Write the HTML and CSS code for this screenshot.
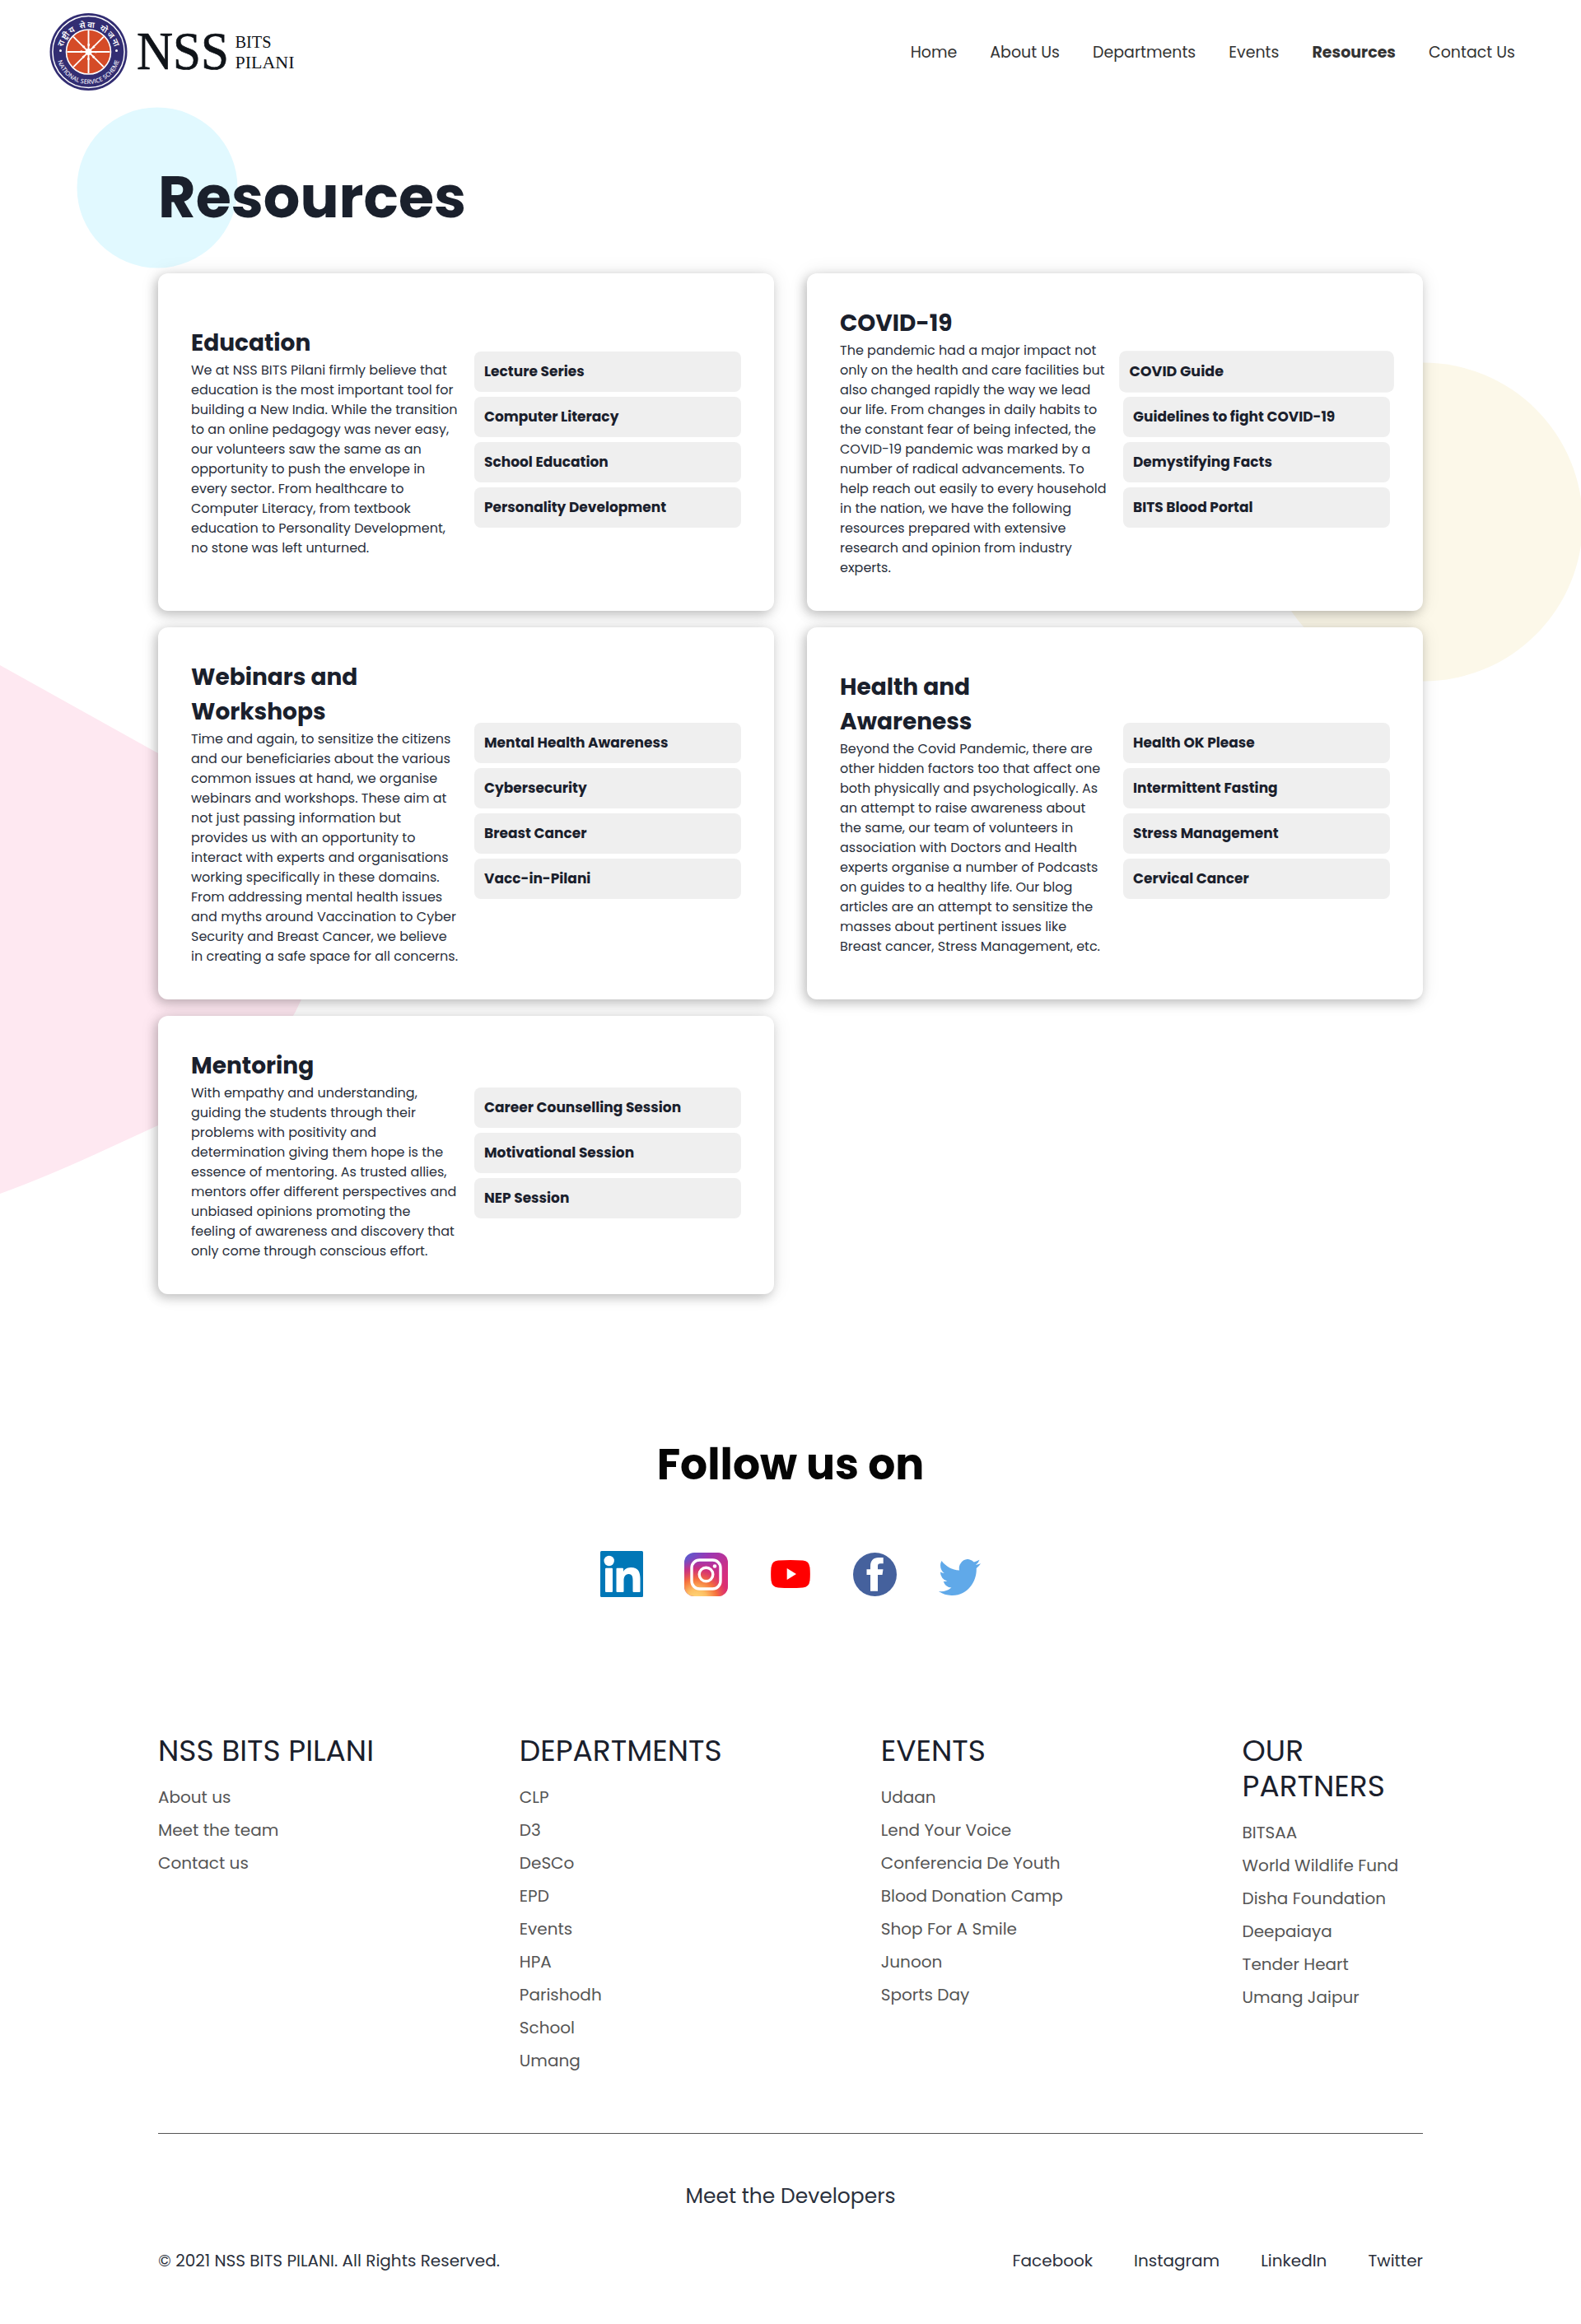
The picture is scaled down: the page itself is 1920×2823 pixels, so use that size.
FILE: index.html
```html
<!DOCTYPE html>
<html lang="en">
<head>
<meta charset="utf-8">
<title>Resources | NSS BITS Pilani</title>
<link rel="stylesheet" href="styles.css">
</head>
<body>
<svg class="shapes" viewBox="0 0 1920 1500" aria-hidden="true">
  <circle cx="191" cy="228" r="97.500" fill="#e1f9ff"/>
  <circle cx="1728.500" cy="634" r="193.500" fill="#fcf8e9"/>
  <path d="M0 808L192 915L340 996Q392 1028 388 1120Q384 1170 366 1214Q330 1300 192 1367L116 1402Q50 1432 0 1450Z" fill="#fee8f1"/>
</svg>

<header class="header">
  <a class="logo" href="#">
    <svg width="300" height="96" viewBox="60 15 300 96">
      <defs>
        <path id="arc-top" d="M75 66A32.500 32.500 0 1 1 140 66"/>
        <path id="arc-bottom" d="M68.500 63A39 39 0 0 0 146.500 63"/>
      </defs>
      <circle cx="107.500" cy="63" r="47" fill="#322d72"/>
      <circle cx="107.500" cy="63" r="43.600" fill="none" stroke="#fff" stroke-width="1.500"/>
      <circle cx="107.500" cy="63" r="27" fill="#d54b27" stroke="#fff" stroke-width="1.600"/>
      <g stroke="#fff" stroke-width="1.900">
        <path d="M107.500 37v52M81.500 63h52M89.100 44.600l36.800 36.800M125.900 44.600L89.100 81.400"/>
      </g>
      <circle cx="107.500" cy="63" r="8.500" fill="none" stroke="#fff" stroke-width="2.600" stroke-dasharray="2.600 4.076" stroke-dashoffset="1.300"/>
      <circle cx="107.500" cy="63" r="4" fill="#fff"/>
      <circle cx="73.500" cy="61.500" r="1.500" fill="#fff"/>
      <circle cx="141.500" cy="61.500" r="1.500" fill="#fff"/>
      <text class="seal-hindi"><textPath href="#arc-top" startOffset="50%" text-anchor="middle" textLength="84">राष्ट्रीय सेवा योजना</textPath></text>
      <text class="seal-english"><textPath href="#arc-bottom" startOffset="50%" text-anchor="middle" textLength="100">NATIONAL SERVICE SCHEME</textPath></text>
      <text class="logo-nss" x="166" y="84" textLength="112" lengthAdjust="spacingAndGlyphs">NSS</text>
      <text class="logo-sub" x="285.500" y="58" textLength="44" lengthAdjust="spacingAndGlyphs">BITS</text>
      <text class="logo-sub" x="285.500" y="83" textLength="72" lengthAdjust="spacingAndGlyphs">PILANI</text>
    </svg>
  </a>
  <nav class="nav">
    <a href="#">Home</a>
    <a href="#">About Us</a>
    <a href="#">Departments</a>
    <a href="#">Events</a>
    <a class="active" href="#">Resources</a>
    <a href="#">Contact Us</a>
  </nav>
</header>

<main class="container">
  <h1 class="page-title">Resources</h1>
  <section class="cards">
    <article class="card">
      <div class="card-text">
        <h2>Education</h2>
        <p>We at NSS BITS Pilani firmly believe that education is the most important tool for building a New India. While the transition to an online pedagogy was never easy, our volunteers saw the same as an opportunity to push the envelope in every sector. From healthcare to Computer Literacy, from textbook education to Personality Development, no stone was left unturned.</p>
      </div>
      <div class="card-links">
        <a href="#">Lecture Series</a>
        <a href="#">Computer Literacy</a>
        <a href="#">School Education</a>
        <a href="#">Personality Development</a>
      </div>
    </article>
    <article class="card">
      <div class="card-text">
        <h2>COVID-19</h2>
        <p>The pandemic had a major impact not only on the health and care facilities but also changed rapidly the way we lead our life. From changes in daily habits to the constant fear of being infected, the COVID-19 pandemic was marked by a number of radical advancements. To help reach out easily to every household in the nation, we have the following resources prepared with extensive research and opinion from industry experts.</p>
      </div>
      <div class="card-links">
        <a class="hovered" href="#">COVID Guide</a>
        <a href="#">Guidelines to fight COVID-19</a>
        <a href="#">Demystifying Facts</a>
        <a href="#">BITS Blood Portal</a>
      </div>
    </article>
    <article class="card">
      <div class="card-text">
        <h2>Webinars and Workshops</h2>
        <p>Time and again, to sensitize the citizens and our beneficiaries about the various common issues at hand, we organise webinars and workshops. These aim at not just passing information but provides us with an opportunity to interact with experts and organisations working specifically in these domains. From addressing mental health issues and myths around Vaccination to Cyber Security and Breast Cancer, we believe in creating a safe space for all concerns.</p>
      </div>
      <div class="card-links">
        <a href="#">Mental Health Awareness</a>
        <a href="#">Cybersecurity</a>
        <a href="#">Breast Cancer</a>
        <a href="#">Vacc-in-Pilani</a>
      </div>
    </article>
    <article class="card">
      <div class="card-text">
        <h2>Health and Awareness</h2>
        <p>Beyond the Covid Pandemic, there are other hidden factors too that affect one both physically and psychologically. As an attempt to raise awareness about the same, our team of volunteers in association with Doctors and Health experts organise a number of Podcasts on guides to a healthy life. Our blog articles are an attempt to sensitize the masses about pertinent issues like Breast cancer, Stress Management, etc.</p>
      </div>
      <div class="card-links">
        <a href="#">Health OK Please</a>
        <a href="#">Intermittent Fasting</a>
        <a href="#">Stress Management</a>
        <a href="#">Cervical Cancer</a>
      </div>
    </article>
    <article class="card">
      <div class="card-text">
        <h2>Mentoring</h2>
        <p>With empathy and understanding, guiding the students through their problems with positivity and determination giving them hope is the essence of mentoring. As trusted allies, mentors offer different perspectives and unbiased opinions promoting the feeling of awareness and discovery that only come through conscious effort.</p>
      </div>
      <div class="card-links">
        <a href="#">Career Counselling Session</a>
        <a href="#">Motivational Session</a>
        <a href="#">NEP Session</a>
      </div>
    </article>
  </section>
</main>

<section class="follow">
  <h2>Follow us on</h2>
  <div class="socials">
    <a href="#" aria-label="LinkedIn"><svg width="52" height="56" viewBox="0 0 52 56"><rect width="52" height="56" rx="1.500" fill="#0077b7"/><g fill="#fff"><circle cx="10.700" cy="12" r="6.200"/><rect x="6" y="20.700" width="9" height="29.300" rx="1"/><path d="M20.500 20.700H27q1 0 1 1v3.200c1.800-3 5.200-5 9.200-5 9 0 11.300 5.800 11.300 13.500V49q0 1-1 1h-7q-1 0-1-1V36c0-4-.5-8-5-8s-6 4-6 8v13q0 1-1 1h-7q-1 0-1-1V21.700q0-1 1-1z"/></g></svg></a>
    <a href="#" aria-label="Instagram"><svg width="53" height="53" viewBox="0 0 53 53"><defs><linearGradient id="ig-base" x1="0" y1="0" x2=".75" y2=".75"><stop offset="0" stop-color="#4f62d3"/><stop offset=".4" stop-color="#9a38b4"/><stop offset="1" stop-color="#dc2c78"/></linearGradient><radialGradient id="ig-warm" cx=".28" cy="1.080" r=".95"><stop offset="0" stop-color="#ffdc7d"/><stop offset=".25" stop-color="#fdbf63"/><stop offset=".5" stop-color="#f5703c"/><stop offset=".75" stop-color="#dd2f6c" stop-opacity=".75"/><stop offset="1" stop-color="#c32f9c" stop-opacity="0"/></radialGradient></defs><rect width="53" height="53" rx="12" fill="url(#ig-base)"/><rect width="53" height="53" rx="12" fill="url(#ig-warm)"/><g fill="none" stroke="#fff" stroke-width="3.400"><rect x="9" y="9" width="35" height="35" rx="9.500"/><circle cx="26.500" cy="26.500" r="8.300"/></g><circle cx="37" cy="16.500" r="2.300" fill="#fff"/></svg></a>
    <a href="#" aria-label="YouTube"><svg width="48" height="34" viewBox="0 0 48 34"><path d="M9 .6Q24-.4 39 .6Q46.500 1 47.500 9Q48.200 17 47.500 25Q46.500 33 39 33.400Q24 34.400 9 33.400Q1.500 33 .5 25Q-.2 17 .5 9Q1.500 1 9 .6Z" fill="#f00"/><path d="M19.700 10L31 17L19.700 24Z" fill="#fff"/></svg></a>
    <a href="#" aria-label="Facebook"><svg width="53" height="53" viewBox="0 0 53 53"><circle cx="26.500" cy="26.500" r="26.500" fill="#45619d"/><path d="M21 46.700V27h-4.500v-6.700H21v-3.500C21 9.500 24.500 6 31 6h5.700v7.300h-3.500c-2.500 0-3.200 1-3.200 3.200v3.800h6.500L35.500 27H30v19.700z" fill="#fff"/></svg></a>
    <a class="bird" href="#" aria-label="Twitter"><svg width="51" height="44" viewBox="0 2.250 24 19.500" preserveAspectRatio="none"><path d="M23.953 4.570a10 10 0 01-2.825.775 4.958 4.958 0 002.163-2.723c-.951.555-2.005.959-3.127 1.184a4.920 4.920 0 00-8.384 4.482C7.690 8.095 4.067 6.130 1.640 3.162a4.822 4.822 0 00-.666 2.475c0 1.710.870 3.213 2.188 4.096a4.904 4.904 0 01-2.228-.616v.060a4.923 4.923 0 003.946 4.827 4.996 4.996 0 01-2.212.085 4.936 4.936 0 004.604 3.417 9.867 9.867 0 01-6.102 2.105c-.390 0-.779-.023-1.170-.067a13.995 13.995 0 007.557 2.209c9.053 0 13.998-7.496 13.998-13.985 0-.210 0-.420-.015-.630A9.935 9.935 0 0024 4.590z" fill="#60a9e9"/></svg></a>
  </div>
</section>

<footer class="footer container">
  <div class="footer-columns">
    <div>
      <h3>NSS BITS PILANI</h3>
      <ul><li>About us</li><li>Meet the team</li><li>Contact us</li></ul>
    </div>
    <div>
      <h3>DEPARTMENTS</h3>
      <ul><li>CLP</li><li>D3</li><li>DeSCo</li><li>EPD</li><li>Events</li><li>HPA</li><li>Parishodh</li><li>School</li><li>Umang</li></ul>
    </div>
    <div>
      <h3>EVENTS</h3>
      <ul><li>Udaan</li><li>Lend Your Voice</li><li>Conferencia De Youth</li><li>Blood Donation Camp</li><li>Shop For A Smile</li><li>Junoon</li><li>Sports Day</li></ul>
    </div>
    <div>
      <h3>OUR<br>PARTNERS</h3>
      <ul><li>BITSAA</li><li>World Wildlife Fund</li><li>Disha Foundation</li><li>Deepaiaya</li><li>Tender Heart</li><li>Umang Jaipur</li></ul>
    </div>
  </div>
  <hr>
  <p class="developers">Meet the Developers</p>
  <div class="footer-bottom">
    <span>© 2021 NSS BITS PILANI. All Rights Reserved.</span>
    <div class="footer-social"><a href="#">Facebook</a><a href="#">Instagram</a><a href="#">LinkedIn</a><a href="#">Twitter</a></div>
  </div>
</footer>
</body>
</html>
```
FILE: styles.css
```css
* {
  box-sizing: border-box;
  margin: 0;
  padding: 0;
}

body {
  position: relative;
  font-family: Poppins, Inter, "Open Sans", sans-serif;
  line-height: 1.5;
  color: #1a202c;
  background: #fff;
}

a {
  color: inherit;
  text-decoration: none;
}

.shapes {
  position: absolute;
  z-index: -1;
  top: 0;
  left: 0;
  width: 1920px;
  height: 1500px;
}

.container {
  width: 1536px;
  margin: 0 auto;
}

.header {
  display: flex;
  align-items: center;
  justify-content: space-between;
  height: 126px;
  padding: 0 80px 0 60px;
}

.logo svg {
  display: block;
}

.seal-hindi {
  font: 600 10px "Noto Sans Devanagari", "Noto Sans", sans-serif;
  fill: #fff;
}

.seal-english {
  font: 600 7.5px "Open Sans", sans-serif;
  fill: #e4e2f0;
}

.logo-nss {
  font: 65px "Liberation Serif", serif;
  fill: #0f1318;
  stroke: #0f1318;
  stroke-width: .7px;
}

.logo-sub {
  font: 21px "Liberation Serif", serif;
  fill: #0f1318;
}

.nav {
  display: flex;
  gap: 40px;
  padding-top: 2px;
  font-size: 19px;
  color: #333;
}

.nav .active {
  font-weight: 700;
}

.page-title {
  padding: 61px 0 40px;
  font-size: 70px;
  font-weight: 700;
  line-height: 105px;
}

.cards {
  display: grid;
  grid-template-columns: 1fr 1fr;
  gap: 20px 40px;
}

.card {
  display: grid;
  grid-template-columns: 324px 324px;
  gap: 20px;
  align-items: center;
  padding: 40px;
  border-radius: 12px;
  background: #fff;
  box-shadow: -3px 4px 13px rgba(0, 0, 0, .22), 0 0 24px rgba(0, 0, 0, .09);
}

.card h2 {
  font-size: 28px;
  font-weight: 700;
  line-height: 42px;
}

.card p {
  font-size: 16px;
  font-weight: 400;
  line-height: 24px;
  color: #2a303c;
}

.card-links a {
  display: block;
  height: 49px;
  margin-bottom: 6px;
  padding: 0 12px;
  border-radius: 8px;
  background: #efefef;
  font-size: 17px;
  font-weight: 700;
  line-height: 49px;
}

.card-links .hovered {
  transform: scale(1.03);
}

.follow {
  padding: 168px 0 0;
  text-align: center;
}

.follow h2 {
  font-size: 52px;
  font-weight: 700;
  line-height: 78px;
  color: #050505;
}

.socials {
  display: grid;
  grid-template-columns: repeat(5, 102.5px);
  justify-content: center;
  align-items: center;
  height: 60px;
  margin-top: 64px;
}

.socials a {
  display: flex;
  justify-content: center;
}

.socials .bird {
  padding-top: 7px;
}

.footer {
  padding-top: 163px;
}

.footer-columns {
  display: grid;
  grid-template-columns: repeat(4, minmax(0, 1fr));
  column-gap: 219.430px;
  height: 486px;
}

.footer h3 {
  margin-bottom: 20px;
  font-size: 36px;
  font-weight: 400;
  line-height: 43px;
  white-space: nowrap;
}

.footer ul {
  list-style: none;
}

.footer li {
  margin-bottom: 10px;
  font-size: 20px;
  line-height: 30px;
  white-space: nowrap;
  color: #555;
}

.footer hr {
  height: 1px;
  border: 0;
  background: #555;
}

.developers {
  margin-top: 57px;
  font-size: 25px;
  line-height: 38px;
  text-align: center;
  color: #2a303c;
}

.footer-bottom {
  display: flex;
  justify-content: space-between;
  margin-top: 44px;
  padding-bottom: 62px;
  font-size: 20px;
  line-height: 30px;
  color: #2a303c;
}

.footer-social {
  display: flex;
  gap: 50px;
}
```
